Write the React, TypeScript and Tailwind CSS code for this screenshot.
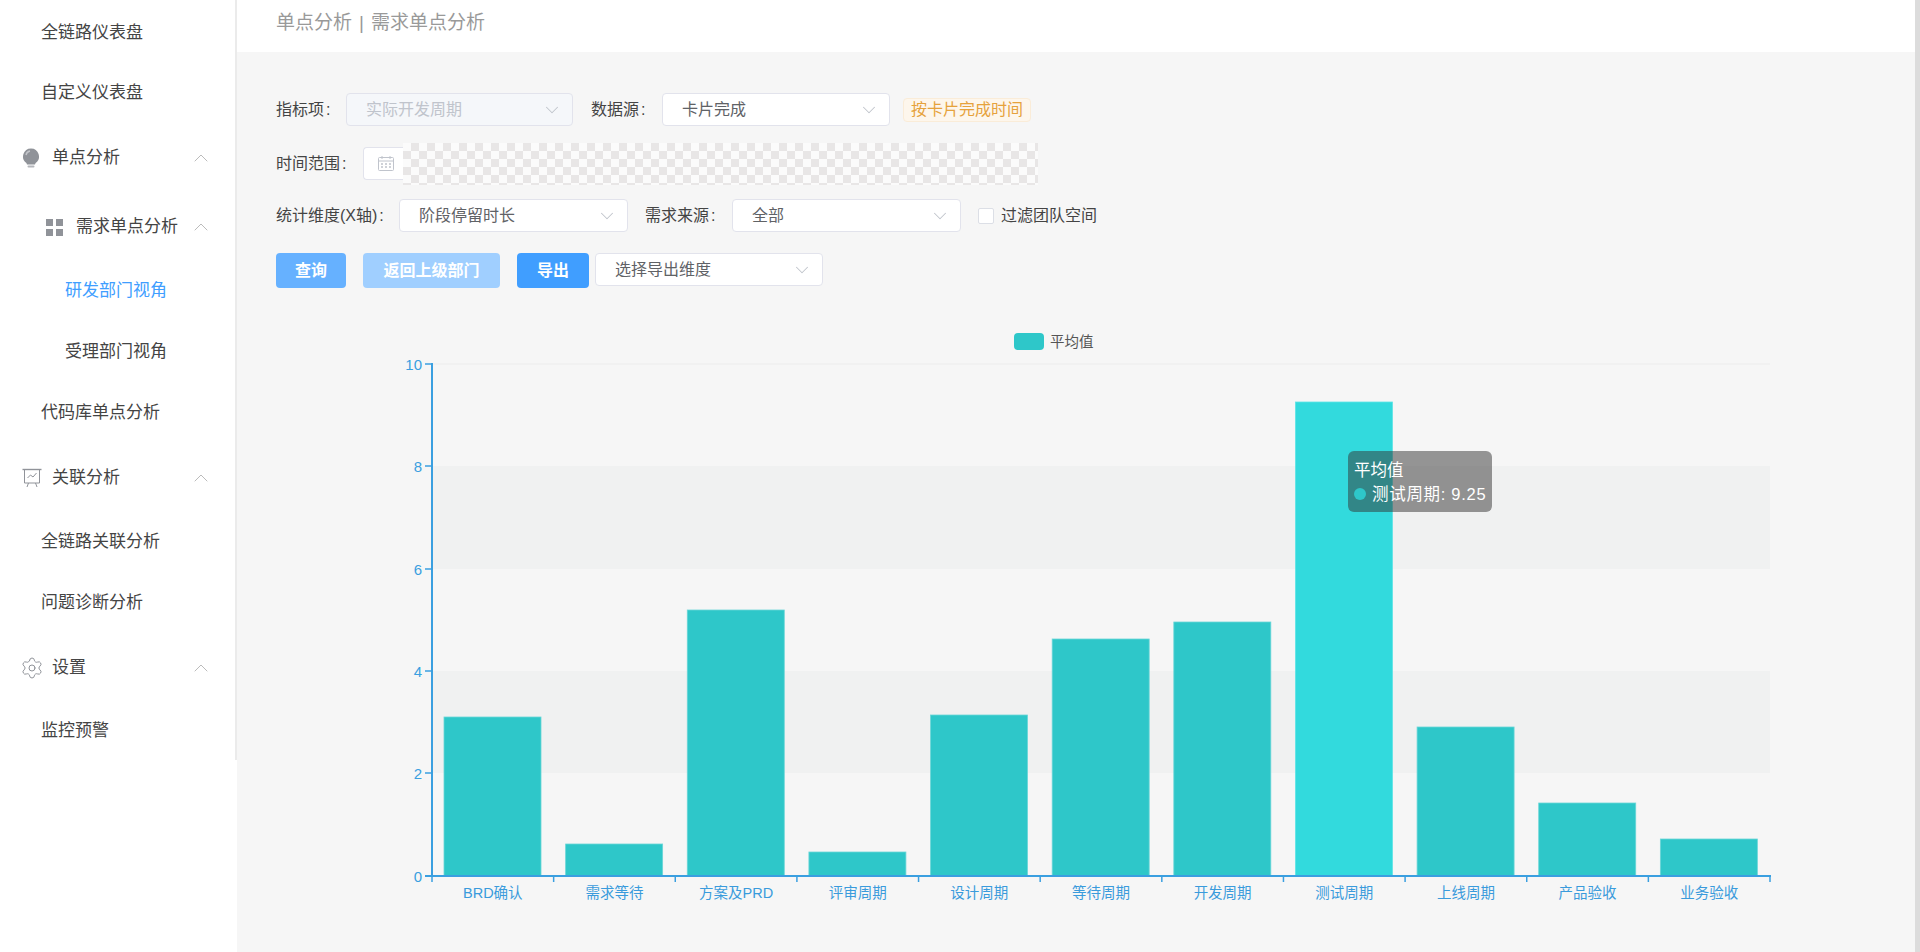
import { ChevronDown, ChevronUp, Settings } from "lucide-react";

const bars = [
  { name: "BRD确认", top: 717 },
  { name: "需求等待", top: 844 },
  { name: "方案及PRD", top: 610 },
  { name: "评审周期", top: 852 },
  { name: "设计周期", top: 715 },
  { name: "等待周期", top: 639 },
  { name: "开发周期", top: 622 },
  { name: "测试周期", top: 402, active: true },
  { name: "上线周期", top: 727 },
  { name: "产品验收", top: 803 },
  { name: "业务验收", top: 839 },
];

const axisX = 432 - 237;
const axisEnd = 1770 - 237;
const zeroY = 876 - 320;
const step = (axisEnd - axisX) / 11;
const ticks = [
  { label: "10", y: 364 },
  { label: "8", y: 466 },
  { label: "6", y: 569 },
  { label: "4", y: 671 },
  { label: "2", y: 773 },
  { label: "0", y: 876 },
];

function BulbIcon() {
  return (
    <svg width="18" height="20" viewBox="0 0 18 20">
      <path d="M9 0.5a8 8 0 0 0-4.6 14.5l0.6 1.5h8l0.6-1.5A8 8 0 0 0 9 0.5z" fill="#909399" />
      <path d="M4 7a5 5 0 0 1 4-4" stroke="#c4c6cb" strokeWidth="1.4" fill="none" />
      <rect x="5.5" y="17.4" width="7" height="2.2" rx="1" fill="#b4b6bb" />
    </svg>
  );
}

function GridIcon() {
  return (
    <svg width="17" height="17" viewBox="0 0 17 17" fill="#909399">
      <rect x="0" y="0" width="7" height="7" />
      <rect x="10" y="0" width="7" height="7" />
      <rect x="0" y="10" width="7" height="7" />
      <rect x="10" y="10" width="7" height="7" />
    </svg>
  );
}

function BoardIcon() {
  return (
    <svg width="20" height="20" viewBox="0 0 20 20" fill="none" stroke="#909399" strokeWidth="1">
      <path d="M0.5 1.5h19" strokeWidth="1.4" />
      <path d="M2.5 1.5v13.5h15V1.5" />
      <path d="M5.5 10l3-3 2.5 2 3.5-4" />
      <path d="M6.5 15l-1.5 4M13.5 15l1.5 4" />
    </svg>
  );
}

function CalendarIcon() {
  return (
    <svg width="16" height="15" viewBox="0 0 16 15" fill="none" stroke="#c0c4cc" strokeWidth="1">
      <rect x="0.5" y="1.5" width="15" height="13" rx="1" />
      <path d="M0.5 5h15M4 0v3M12 0v3" />
      <path d="M3 8h2M7 8h2M11 8h2M3 11h2M7 11h2M11 11h2" strokeWidth="1.5" />
    </svg>
  );
}

function Leaf({ label, pad, active, h }: { label: string; pad: string; active?: boolean; h: string }) {
  return (
    <div className={`flex items-center text-[17px] ${pad} ${h} ${active ? "text-[#409eff]" : "text-[#444]"}`}>
      {label}
    </div>
  );
}

function Group({ label, icon, h, textPad }: { label: string; icon: React.ReactNode; h: string; textPad: string }) {
  return (
    <div className={`flex items-center justify-between pr-[22px] text-[17px] text-[#444] ${h} ${textPad}`}>
      <div className="flex items-center">
        <div className="flex w-[30px] items-center">{icon}</div>
        {label}
      </div>
      <ChevronUp size={24} strokeWidth={1} className="text-[#bbb]" />
    </div>
  );
}

function Select({ value, width, disabled }: { value: string; width: string; disabled?: boolean }) {
  return (
    <div
      className={`flex h-[33px] items-center justify-between rounded border border-[#e2e3ec] pl-[19px] pr-[9px] text-[16px] ${width} ${
        disabled ? "bg-[#f5f7fa] text-[#c0c4cc]" : "bg-white text-[#606266]"
      }`}
    >
      {value}
      <ChevronDown size={22} strokeWidth={1.1} className="text-[#c0c4cc]" />
    </div>
  );
}

function Label({ text, className }: { text: string; className?: string }) {
  return (
    <span className={`text-[16px] text-[#444] ${className ?? ""}`}>
      {text}
      <span className="ml-[2px]">:</span>
    </span>
  );
}

function Chart() {
  return (
    <div className="relative mt-[32px] h-[600px] w-full">
      <svg width="1678" height="600" viewBox="0 0 1678 600" className="block">
        <rect x={axisX} y={146} width={axisEnd - axisX} height={103} fill="#f0f1f1" />
        <rect x={axisX} y={351} width={axisEnd - axisX} height={102} fill="#f0f1f1" />
        <line x1={axisX} y1={44} x2={axisEnd} y2={44} stroke="#ececec" />

        <rect x={777} y={13} width={30} height={17} rx={4} fill="#2ec7c9" />
        <text x={813} y={27} fontSize="14.5" fill="#555">
          平均值
        </text>

        {bars.map((b, i) => (
          <rect
            key={b.name}
            x={axisX + 12 + step * i}
            y={b.top - 320}
            width={97}
            height={876 - b.top}
            fill={b.active ? "#32dadd" : "#2ec7c9"}
            stroke={b.active ? "#5ce4e6" : "#6ad6d8"}
            strokeWidth="0.8"
          />
        ))}

        <line x1={axisX} y1={43} x2={axisX} y2={zeroY} stroke="#3a9fe0" strokeWidth="2" />
        <line x1={axisX - 7} y1={zeroY} x2={axisEnd + 1} y2={zeroY} stroke="#3a9fe0" strokeWidth="2" />
        {ticks.map((t) => (
          <g key={t.label}>
            <line x1={axisX - 7} y1={t.y - 320} x2={axisX} y2={t.y - 320} stroke="#3a9fe0" strokeWidth="1.5" />
            <text x={axisX - 10} y={t.y - 320 + 5.5} textAnchor="end" fontSize="15" fill="#3a9fe0">
              {t.label}
            </text>
          </g>
        ))}
        {Array.from({ length: 12 }).map((_, i) => (
          <line
            key={i}
            x1={axisX + step * i}
            y1={zeroY}
            x2={axisX + step * i}
            y2={zeroY + 6}
            stroke="#3a9fe0"
            strokeWidth="1.5"
          />
        ))}
        {bars.map((b, i) => (
          <text key={b.name} x={axisX + step * (i + 0.5)} y={zeroY + 22} textAnchor="middle" fontSize="14.5" fill="#3a9bdc">
            {b.name}
          </text>
        ))}
      </svg>

      {/* tooltip on the hovered bar */}
      <div className="absolute left-[1111px] top-[131px] flex h-[61px] w-[144px] flex-col justify-center rounded-md bg-[rgba(50,50,50,0.5)] pl-[6px] text-[16.5px] leading-[24px] text-white">
        <div>平均值</div>
        <div className="flex items-center gap-[6px]">
          <span className="h-3 w-3 rounded-full bg-[#2ec7c9]" />
          <span className="tracking-[0.7px]">测试周期: 9.25</span>
        </div>
      </div>
    </div>
  );
}

export default function App() {
  return (
    <div className="flex h-[952px] w-[1920px] overflow-hidden bg-[#f6f6f6] font-[family-name:'Liberation_Sans','Noto_Sans_CJK_SC',sans-serif]">
      {/* Sidebar */}
      <div className="w-[237px] shrink-0 bg-white">
        <div className="h-[760px] border-r-2 border-[#ebebeb] pt-[2px]">
          <Leaf label="全链路仪表盘" pad="pl-[41px]" h="h-[61px]" />
          <Leaf label="自定义仪表盘" pad="pl-[41px]" h="h-[60px]" />
          <Group label="单点分析" icon={<BulbIcon />} h="h-[70px]" textPad="pl-[22px]" />
          <Group label="需求单点分析" icon={<GridIcon />} h="h-[68px]" textPad="pl-[46px]" />
          <Leaf label="研发部门视角" pad="pl-[65px]" active h="h-[60px]" />
          <Leaf label="受理部门视角" pad="pl-[65px]" h="h-[61px]" />
          <Leaf label="代码库单点分析" pad="pl-[41px]" h="h-[62px]" />
          <Group label="关联分析" icon={<BoardIcon />} h="h-[67px]" textPad="pl-[22px]" />
          <Leaf label="全链路关联分析" pad="pl-[41px]" h="h-[61px]" />
          <Leaf label="问题诊断分析" pad="pl-[41px]" h="h-[61px]" />
          <Group
            label="设置"
            icon={<Settings size={24} strokeWidth={1} className="-ml-[2px] text-[#909399]" />}
            h="h-[70px]"
            textPad="pl-[22px]"
          />
          <Leaf label="监控预警" pad="pl-[41px]" h="h-[56px]" />
        </div>
      </div>

      {/* Main content */}
      <div className="flex min-w-0 flex-1 flex-col">
        <div className="h-[52px] shrink-0 bg-white pl-[39px] pt-[8px] text-[19px] leading-[30px] text-[#999]">
          单点分析
          <span className="mx-[7px]">|</span>
          需求单点分析
        </div>
        <div className="pt-[41px]">
          <div className="flex h-[33px] items-center pl-[39px]">
            <Label text="指标项" className="w-[70px]" />
            <Select value="实际开发周期" width="w-[227px]" disabled />
            <Label text="数据源" className="ml-[18px] w-[71px]" />
            <Select value="卡片完成" width="w-[228px]" />
            <span className="ml-[13px] flex h-[24px] items-center rounded border border-[#faecd8] bg-[#fdf6ec] px-[7px] text-[16px] text-[#e6a23c]">
              按卡片完成时间
            </span>
          </div>

          <div className="mt-[21px] flex h-[33px] items-center pl-[39px]">
            <Label text="时间范围" className="w-[87px]" />
            <div className="flex h-[33px] w-[44px] items-center rounded-l border border-r-0 border-[#e2e3ec] bg-white pl-[14px]">
              <CalendarIcon />
            </div>
            <div className="-ml-[4px] h-[42px] w-[635px] bg-[image:repeating-conic-gradient(#e8e6e6_0_25%,#fbfbfb_0_50%)] bg-[length:16px_16px] blur-[0.6px]" />
          </div>

          <div className="mt-[19px] flex h-[33px] items-center pl-[39px]">
            <Label text="统计维度(X轴)" className="w-[123px]" />
            <Select value="阶段停留时长" width="w-[229px]" />
            <Label text="需求来源" className="ml-[17px] w-[87px]" />
            <Select value="全部" width="w-[229px]" />
            <span className="ml-[17px] h-[16px] w-[16px] rounded-[2px] border border-[#dcdfe6] bg-white" />
            <span className="ml-[7px] text-[16px] text-[#444]">过滤团队空间</span>
          </div>

          <div className="mt-[21px] flex items-start pl-[39px]">
            <button className="h-[35px] w-[70px] rounded bg-[#66b1ff] text-[16px] font-bold text-white">查询</button>
            <button className="ml-[17px] h-[35px] w-[137px] rounded bg-[#a0cfff] text-[16px] font-bold text-white">
              返回上级部门
            </button>
            <button className="ml-[17px] h-[35px] w-[72px] rounded bg-[#409eff] text-[16px] font-bold text-white">导出</button>
            <div className="ml-[6px]">
              <Select value="选择导出维度" width="w-[228px]" />
            </div>
          </div>

          <Chart />
        </div>
      </div>

      {/* Right scrollbar edge */}
      <div className="w-[5px] shrink-0 bg-[#dcdcdc]" />
    </div>
  );
}
